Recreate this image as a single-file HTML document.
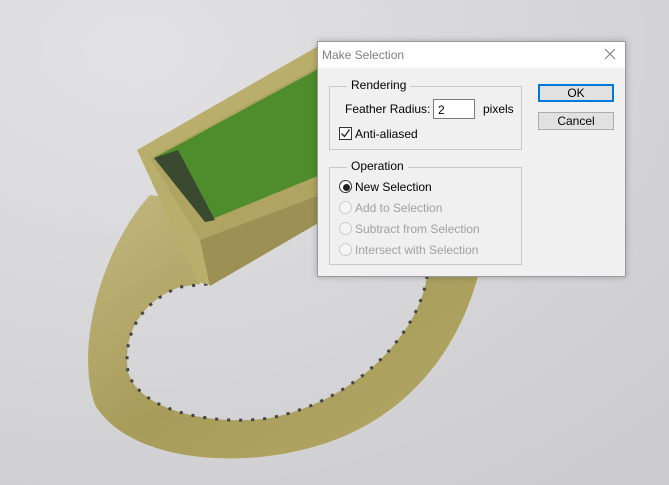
<!DOCTYPE html>
<html><head><meta charset="utf-8"><style>
*{margin:0;padding:0;box-sizing:border-box}
body{width:669px;height:485px;overflow:hidden;position:relative;background:#d6d6d8;font-family:"Liberation Sans",sans-serif}
.a{position:absolute}
.dlg{left:317px;top:41px;width:309px;height:236px;background:#f0f0f0;border:1px solid #9a9a9a;box-shadow:0 0 6px rgba(0,0,0,.25)}
.tb{left:0;top:0;width:307px;height:26px;background:#fff}
.t{font-size:12px;color:#000;white-space:nowrap}
.g{border:1px solid #c8c8c8}
.lg{background:#f0f0f0;padding:0 4px}
.btn{width:76px;height:18px;border:1px solid #adadad;background:#e1e1e1;text-align:center;font-size:12px;line-height:16px}
.rad{width:13px;height:13px;border-radius:50%;border:1px solid #ccc;background:#f4f4f4}
.dis{color:#a0a0a0}
</style></head><body>
<svg class="a" style="left:0;top:0" width="669" height="485">
<defs>
<radialGradient id="bg" cx="0.2" cy="0.1" r="1.1"><stop offset="0" stop-color="#e2e2e4"/><stop offset="1" stop-color="#cdcdcf"/></radialGradient>
<linearGradient id="gold" x1="0" y1="0" x2="1" y2="1"><stop offset="0" stop-color="#c2b880"/><stop offset=".5" stop-color="#a89c5a"/><stop offset="1" stop-color="#b3a866"/></linearGradient>
</defs>
<rect width="669" height="485" fill="url(#bg)"/>
<path d="M150,195 C100,250 75,350 95,405 C130,462 240,470 320,445 C400,420 455,360 478,276 L427,276 C420,330 360,400 270,418 C215,426 140,412 128,372 C122,330 145,300 180,287 L200,284 L190,200 Z" fill="url(#gold)"/>
<path d="M427,276 C420,330 360,400 270,418 C215,426 140,412 128,372 C122,330 145,300 180,287 L207,284 L246,260 L314,221" fill="none" stroke="#444" stroke-width="3" stroke-dasharray="3 9"/>
<polygon points="137,150 320,45 320,220 210,285 198,282" fill="#b9ae6c"/>
<polygon points="150,158 320,65 320,205 200,240" fill="#b0a462"/>
<polygon points="154,158 320,68 320,175 205,222" fill="#4f8d2c"/>
<polygon points="154,158 178,150 215,220 205,222" fill="#3a4a30"/>
<polygon points="200,240 320,195 320,222 210,286" fill="#9c9055"/>
</svg>
<div class="a dlg">
 <div class="a tb"></div>
 <div class="a t" style="left:4px;top:6px;color:#808080">Make Selection</div>
 <svg class="a" style="left:286px;top:6px" width="12" height="12"><path d="M1,1L11,11M11,1L1,11" stroke="#777" stroke-width="1"/></svg>
 <div class="a g" style="left:11px;top:44px;width:193px;height:64px"></div>
 <div class="a t lg" style="left:29px;top:36px">Rendering</div>
 <div class="a t" style="left:27px;top:60px">Feather Radius:</div>
 <div class="a" style="left:115px;top:57px;width:42px;height:20px;background:#fff;border:1px solid #7a7a7a"></div>
 <div class="a t" style="left:120px;top:61px">2</div>
 <div class="a t" style="left:165px;top:60px">pixels</div>
 <div class="a" style="left:21px;top:85px;width:13px;height:13px;background:#fff;border:1px solid #333"></div>
 <svg class="a" style="left:22px;top:86px" width="11" height="11"><path d="M1.5,5.5L4.5,8.5L9.5,1.5" fill="none" stroke="#222" stroke-width="1.3"/></svg>
 <div class="a t" style="left:37px;top:85px">Anti-aliased</div>
 <div class="a g" style="left:11px;top:125px;width:193px;height:98px"></div>
 <div class="a t lg" style="left:29px;top:117px">Operation</div>
 <div class="a rad" style="left:21px;top:138px;border-color:#333;background:#fff"></div>
 <div class="a" style="left:25px;top:142px;width:7px;height:7px;border-radius:50%;background:#222"></div>
 <div class="a t" style="left:37px;top:138px">New Selection</div>
 <div class="a rad" style="left:21px;top:159px"></div>
 <div class="a t dis" style="left:37px;top:159px">Add to Selection</div>
 <div class="a rad" style="left:21px;top:180px"></div>
 <div class="a t dis" style="left:37px;top:180px">Subtract from Selection</div>
 <div class="a rad" style="left:21px;top:201px"></div>
 <div class="a t dis" style="left:37px;top:201px">Intersect with Selection</div>
 <div class="a btn" style="left:220px;top:42px;border:2px solid #0078d7;line-height:14px">OK</div>
 <div class="a btn" style="left:220px;top:70px">Cancel</div>
</div>
</body></html>
